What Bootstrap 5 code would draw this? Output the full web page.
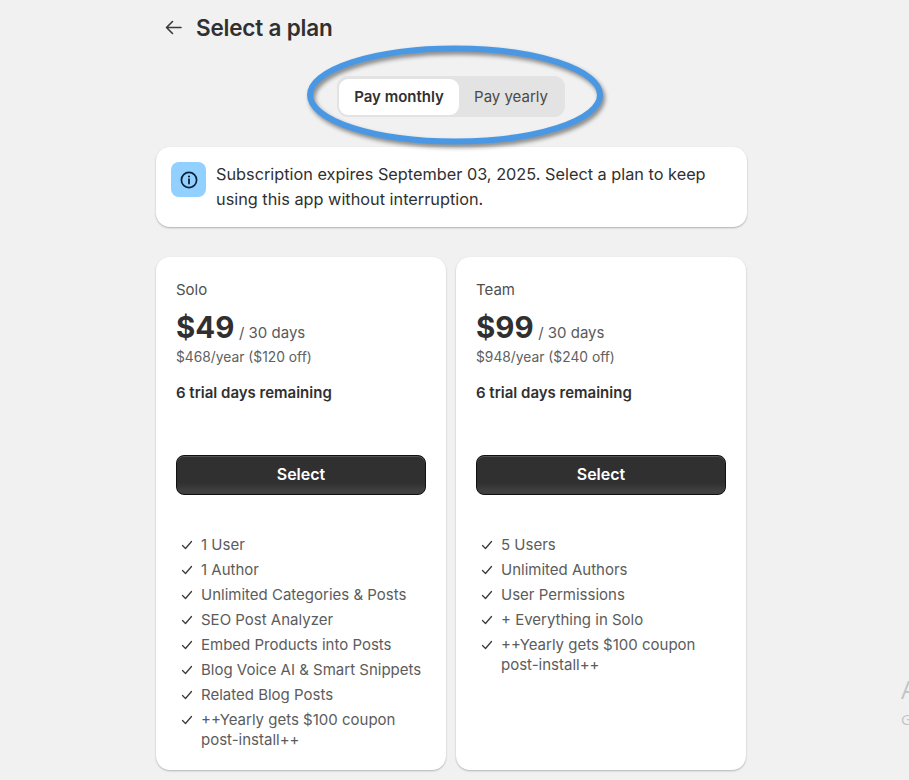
<!DOCTYPE html>
<html lang="en">
<head>
<meta charset="utf-8">
<title>Select a plan</title>
<link href="https://cdn.jsdelivr.net/npm/bootstrap@5.3.0/dist/css/bootstrap.min.css" rel="stylesheet">
<style>
html,body{height:780px;overflow:hidden;}
body{background:#f1f1f1;font-family:Inter,"Liberation Sans",sans-serif;color:#303030;position:relative;}
.page-wrap{width:591px;margin-left:155.5px;}
.head-row{height:55px;padding-left:8.5px;gap:13px;}
.head-title{font-size:22.5px;font-weight:600;line-height:32px;margin:0;letter-spacing:-.2px;color:#303030;}
.toggle-row{height:92px;padding-top:21px;}
.toggle-box{width:228px;height:41px;background:#e3e3e3;border-radius:11px;padding:3px 2px;}
.toggle-item{height:36px;font-size:15px;line-height:36px;text-align:center;color:#4a4a4a;border-radius:9px;}
.toggle-on{width:120px;background:#fff;font-weight:600;color:#303030;}
.toggle-off{width:104px;}
.info-panel{background:#fff;border-radius:14px;height:80px;padding:15px 15.5px;gap:10px;box-shadow:0 1px 2px rgba(0,0,0,.28);font-size:16.3px;line-height:25px;color:#303030;}
.info-icon{width:35px;height:35px;flex:none;background:#91d0ff;border-radius:8px;}
.plans{gap:9.5px;margin-top:30px;}
.plan-panel{width:290.5px;height:513px;background:#fff;border-radius:14px;padding:23px 20px 0 20.5px;box-shadow:0 1px 2px rgba(0,0,0,.25);}
.plan-name{font-size:15px;line-height:20px;color:#4f4f4f;}
.price-row{margin-top:8px;line-height:38px;height:38px;}
.price-big{font-size:29.5px;font-weight:700;color:#303030;}
.price-per{font-size:15px;color:#5a5a5a;}
.price-year{font-size:13.8px;line-height:18px;color:#616161;margin-top:2px;}
.trial{font-size:15px;font-weight:600;line-height:20px;color:#303030;margin-top:17px;}
.sel-btn{display:block;width:100%;height:40px;margin-top:52px;padding:0 0 3px;border:1px solid #111;border-radius:8px;font-size:16px;font-weight:600;color:#fff;background:linear-gradient(#303030,#303030 70%,#454545);box-shadow:inset 0 1px 0 #555,inset 0 -2px 0 #3f3f3f;}
.feat-list{margin:40px 0 0;padding:0 0 0 5px;list-style:none;font-size:15px;line-height:20px;color:#5c5c5c;}
.feat-list li{display:flex;gap:8px;margin-bottom:5px;}
.feat-list svg{flex:none;margin-top:4px;}
.ring{position:absolute;left:300px;top:38px;pointer-events:none;overflow:visible;filter:drop-shadow(2px 3px 2px rgba(0,0,0,.45));}
.os-mark{position:absolute;left:901px;top:677px;color:#c4c4c4;font-family:"Open Sans",sans-serif;line-height:1;white-space:nowrap;}
.os-a{font-size:25px;}
.os-b{font-size:15px;margin-top:10px;}
</style>
</head>
<body>
<div class="page-wrap">
  <div class="head-row d-flex align-items-center">
    <svg width="19" height="19" viewBox="0 0 19 19" fill="none" stroke="#3a3a3a" stroke-width="1.6" stroke-linecap="round" stroke-linejoin="round"><path d="M17 9.5H2.5M8.5 3.5l-6 6 6 6"/></svg>
    <h1 class="head-title">Select a plan</h1>
  </div>
  <div class="toggle-row d-flex justify-content-center">
    <div class="toggle-box d-flex">
      <div class="toggle-item toggle-on">Pay monthly</div>
      <div class="toggle-item toggle-off">Pay yearly</div>
    </div>
  </div>
  <div class="info-panel d-flex">
    <div class="info-icon d-flex align-items-center justify-content-center">
      <svg width="18" height="18" viewBox="0 0 18 18" fill="none"><circle cx="9" cy="9" r="7.6" stroke="#0b2238" stroke-width="1.7"/><path d="M9 8.2v4.3" stroke="#0b2238" stroke-width="1.8" stroke-linecap="round"/><circle cx="9" cy="5.5" r="1.1" fill="#0b2238"/></svg>
    </div>
    <div>Subscription expires September 03, 2025. Select a plan to keep using this app without interruption.</div>
  </div>
  <div class="plans d-flex">
    <div class="plan-panel">
      <div class="plan-name">Solo</div>
      <div class="price-row"><span class="price-big">$49</span> <span class="price-per">/ 30 days</span></div>
      <div class="price-year">$468/year ($120 off)</div>
      <div class="trial">6 trial days remaining</div>
      <button type="button" class="btn sel-btn">Select</button>
      <ul class="feat-list">
        <li><svg width="12" height="12" viewBox="0 0 12 12" fill="none" stroke="#3a3a3a" stroke-width="1.3" stroke-linecap="round" stroke-linejoin="round"><path d="M1.5 6.5 4.5 9.5 10.5 2.5"/></svg><span>1 User</span></li>
        <li><svg width="12" height="12" viewBox="0 0 12 12" fill="none" stroke="#3a3a3a" stroke-width="1.3" stroke-linecap="round" stroke-linejoin="round"><path d="M1.5 6.5 4.5 9.5 10.5 2.5"/></svg><span>1 Author</span></li>
        <li><svg width="12" height="12" viewBox="0 0 12 12" fill="none" stroke="#3a3a3a" stroke-width="1.3" stroke-linecap="round" stroke-linejoin="round"><path d="M1.5 6.5 4.5 9.5 10.5 2.5"/></svg><span>Unlimited Categories &amp; Posts</span></li>
        <li><svg width="12" height="12" viewBox="0 0 12 12" fill="none" stroke="#3a3a3a" stroke-width="1.3" stroke-linecap="round" stroke-linejoin="round"><path d="M1.5 6.5 4.5 9.5 10.5 2.5"/></svg><span>SEO Post Analyzer</span></li>
        <li><svg width="12" height="12" viewBox="0 0 12 12" fill="none" stroke="#3a3a3a" stroke-width="1.3" stroke-linecap="round" stroke-linejoin="round"><path d="M1.5 6.5 4.5 9.5 10.5 2.5"/></svg><span>Embed Products into Posts</span></li>
        <li><svg width="12" height="12" viewBox="0 0 12 12" fill="none" stroke="#3a3a3a" stroke-width="1.3" stroke-linecap="round" stroke-linejoin="round"><path d="M1.5 6.5 4.5 9.5 10.5 2.5"/></svg><span>Blog Voice AI &amp; Smart Snippets</span></li>
        <li><svg width="12" height="12" viewBox="0 0 12 12" fill="none" stroke="#3a3a3a" stroke-width="1.3" stroke-linecap="round" stroke-linejoin="round"><path d="M1.5 6.5 4.5 9.5 10.5 2.5"/></svg><span>Related Blog Posts</span></li>
        <li><svg width="12" height="12" viewBox="0 0 12 12" fill="none" stroke="#3a3a3a" stroke-width="1.3" stroke-linecap="round" stroke-linejoin="round"><path d="M1.5 6.5 4.5 9.5 10.5 2.5"/></svg><span>++Yearly gets $100 coupon post-install++</span></li>
      </ul>
    </div>
    <div class="plan-panel">
      <div class="plan-name">Team</div>
      <div class="price-row"><span class="price-big">$99</span> <span class="price-per">/ 30 days</span></div>
      <div class="price-year">$948/year ($240 off)</div>
      <div class="trial">6 trial days remaining</div>
      <button type="button" class="btn sel-btn">Select</button>
      <ul class="feat-list">
        <li><svg width="12" height="12" viewBox="0 0 12 12" fill="none" stroke="#3a3a3a" stroke-width="1.3" stroke-linecap="round" stroke-linejoin="round"><path d="M1.5 6.5 4.5 9.5 10.5 2.5"/></svg><span>5 Users</span></li>
        <li><svg width="12" height="12" viewBox="0 0 12 12" fill="none" stroke="#3a3a3a" stroke-width="1.3" stroke-linecap="round" stroke-linejoin="round"><path d="M1.5 6.5 4.5 9.5 10.5 2.5"/></svg><span>Unlimited Authors</span></li>
        <li><svg width="12" height="12" viewBox="0 0 12 12" fill="none" stroke="#3a3a3a" stroke-width="1.3" stroke-linecap="round" stroke-linejoin="round"><path d="M1.5 6.5 4.5 9.5 10.5 2.5"/></svg><span>User Permissions</span></li>
        <li><svg width="12" height="12" viewBox="0 0 12 12" fill="none" stroke="#3a3a3a" stroke-width="1.3" stroke-linecap="round" stroke-linejoin="round"><path d="M1.5 6.5 4.5 9.5 10.5 2.5"/></svg><span>+ Everything in Solo</span></li>
        <li><svg width="12" height="12" viewBox="0 0 12 12" fill="none" stroke="#3a3a3a" stroke-width="1.3" stroke-linecap="round" stroke-linejoin="round"><path d="M1.5 6.5 4.5 9.5 10.5 2.5"/></svg><span>++Yearly gets $100 coupon post-install++</span></li>
      </ul>
    </div>
  </div>
</div>
<svg class="ring" width="320" height="120" viewBox="0 0 320 120" fill="none">
  <ellipse cx="155" cy="57" rx="145" ry="46.5" stroke="#4a98e3" stroke-width="6"/>
</svg>
<div class="os-mark"><div class="os-a">Activate Windows</div><div class="os-b">Go to Settings to activate Windows.</div></div>
</body>
</html>
